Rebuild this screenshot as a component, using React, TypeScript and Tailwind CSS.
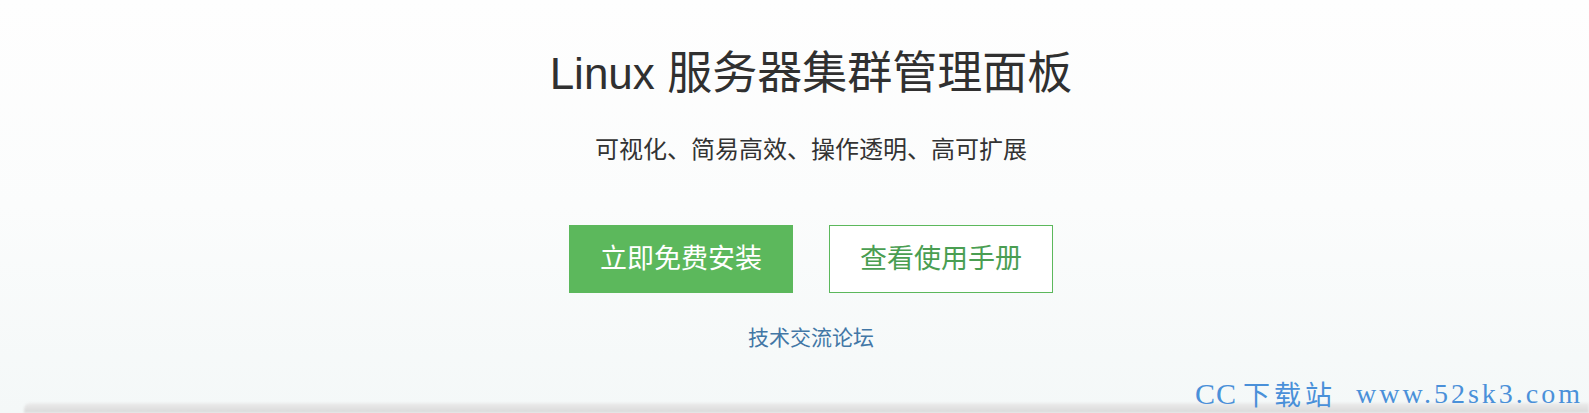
import React from 'react'

const sans = { fontFamily: '"Liberation Sans", "Noto Sans CJK SC", sans-serif' }
const serif = { fontFamily: '"Liberation Serif", "Noto Sans CJK SC", serif' }

function App() {
  return (
    <div className="relative w-[1589px] h-[413px] overflow-hidden bg-gradient-to-b from-[#fefefe] via-[#fbfcfc] to-[#f4f8f8]" style={sans}>
      <section className="h-[403px] pl-[33px] flex flex-col items-center">
        <h1 className="pt-[44px] leading-[60px] text-[45px] text-[#303030] font-normal">
          <span className="text-[44px]">Linux</span> 服务器集群管理面板
        </h1>
        <p className="mt-[30px] leading-[32px] text-[24px] text-[#333]">
          可视化、简易高效、操作透明、高可扩展
        </p>
        <div className="mt-[59px] flex gap-[36px]">
          <button className="w-[224px] h-[68px] bg-[#5cb85c] text-white text-[27px] leading-none">
            立即免费安装
          </button>
          <button className="w-[224px] h-[68px] bg-white border border-[#5cb85c] text-[#4a9e52] text-[27px] leading-none">
            查看使用手册
          </button>
        </div>
        <a href="#" className="mt-[31px] leading-[28px] text-[21px] text-[#4277a6]">
          技术交流论坛
        </a>
      </section>
      <div className="ml-[24px] h-[10px] bg-gradient-to-b from-[#ececec] to-[#d9d9d9] rounded-tl-[6px] blur-[1px]" />

      {/* watermark */}
      <div className="absolute left-[1195px] top-[378px] h-[32px] flex items-center text-[#4a90d9] leading-[32px]" style={serif}>
        <span className="text-[30px] tracking-[1px]">CC</span>
        <span className="ml-[6px] text-[27px] tracking-[4px]" style={{ fontFamily: '"Noto Sans CJK SC", sans-serif' }}>下载站</span>
        <span className="ml-[20px] text-[28px] tracking-[3px]">www.52sk3.com</span>
      </div>
    </div>
  )
}

export default App
